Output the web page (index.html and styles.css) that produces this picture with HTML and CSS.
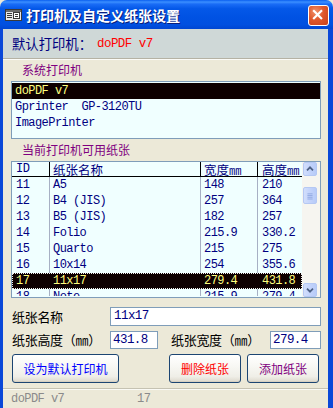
FILE: index.html
```html
<!DOCTYPE html>
<html lang="zh-CN">
<head>
<meta charset="utf-8">
<title>打印机及自定义纸张设置</title>
<link rel="stylesheet" href="styles.css">
</head>
<body>
<div class="window">
  <div class="titlebar">
    <svg class="app-icon" viewBox="0 0 17 12" width="17" height="12">
      <rect x="0.5" y="0.5" width="16" height="11" fill="#e8e8e8" stroke="#3a3a3a"/>
      <rect x="1" y="1" width="15" height="2" fill="#6a6a6a"/>
      <rect x="2" y="4" width="5" height="1" fill="#3a3a3a"/>
      <rect x="2" y="6" width="5" height="1" fill="#3a3a3a"/>
      <rect x="2" y="8" width="5" height="1" fill="#3a3a3a"/>
      <rect x="8.5" y="3.5" width="6" height="6" fill="#fff" stroke="#3a3a3a"/>
      <rect x="10" y="5" width="3" height="1" fill="#3a3a3a"/>
      <rect x="10" y="7" width="3" height="1" fill="#3a3a3a"/>
    </svg>
    <span class="title">打印机及自定义纸张设置</span>
    <div class="close">
      <svg viewBox="0 0 21 21" width="19" height="19">
        <path d="M5.5 5.5 L13.5 13.5 M13.5 5.5 L5.5 13.5" stroke="#fff" stroke-width="2.4" stroke-linecap="square"/>
      </svg>
    </div>
  </div>
  <div class="frame">
    <div class="client">
      <div class="default-strip">
        <span class="dlabel">默认打印机：</span><span class="dvalue mono">doPDF v7</span>
      </div>

      <div class="group-label">系统打印机</div>
      <div class="listbox">
        <div class="li mono selected">doPDF v7</div>
        <div class="li mono">Gprinter  GP-3120TU</div>
        <div class="li mono">ImagePrinter</div>
      </div>

      <div class="group-label">当前打印机可用纸张</div>
      <div class="grid">
        <div class="table">
          <div class="row head">
            <div class="c c-id mono">ID</div>
            <div class="c c-name">纸张名称</div>
            <div class="c c-w">宽度㎜</div>
            <div class="c c-h">高度㎜</div>
          </div>
          <div class="row mono"><div class="c c-id">11</div><div class="c c-name">A5</div><div class="c c-w">148</div><div class="c c-h">210</div></div>
          <div class="row mono"><div class="c c-id">12</div><div class="c c-name">B4 (JIS)</div><div class="c c-w">257</div><div class="c c-h">364</div></div>
          <div class="row mono"><div class="c c-id">13</div><div class="c c-name">B5 (JIS)</div><div class="c c-w">182</div><div class="c c-h">257</div></div>
          <div class="row mono"><div class="c c-id">14</div><div class="c c-name">Folio</div><div class="c c-w">215.9</div><div class="c c-h">330.2</div></div>
          <div class="row mono"><div class="c c-id">15</div><div class="c c-name">Quarto</div><div class="c c-w">215</div><div class="c c-h">275</div></div>
          <div class="row mono"><div class="c c-id">16</div><div class="c c-name">10x14</div><div class="c c-w">254</div><div class="c c-h">355.6</div></div>
          <div class="row mono selected"><div class="c c-id">17</div><div class="c c-name">11x17</div><div class="c c-w">279.4</div><div class="c c-h">431.8</div></div>
          <div class="row mono partial"><div class="c c-id">18</div><div class="c c-name">Note</div><div class="c c-w">215.9</div><div class="c c-h">279.4</div></div>
        </div>
        <div class="scrollbar">
          <div class="sb-btn">
            <svg viewBox="0 0 14 14" width="14" height="14"><path d="M3.5 8.5 L7 5 L10.5 8.5" fill="none" stroke="#4d6185" stroke-width="2"/></svg>
          </div>
          <div class="sb-gap"></div>
          <div class="sb-thumb">
            <svg viewBox="0 0 14 16" width="14" height="16"><path d="M4 5.5h6M4 7.5h6M4 9.5h6M4 11.5h6" stroke="#8ca5e0" stroke-width="1"/></svg>
          </div>
          <div class="sb-track"></div>
          <div class="sb-btn">
            <svg viewBox="0 0 14 14" width="14" height="14"><path d="M3.5 5.5 L7 9 L10.5 5.5" fill="none" stroke="#4d6185" stroke-width="2"/></svg>
          </div>
        </div>
      </div>

      <div class="form-row row1">
        <span class="flabel">纸张名称</span>
        <div class="input wide mono">11x17</div>
      </div>
      <div class="form-row row2">
        <span class="flabel">纸张高度（㎜）</span>
        <div class="input small mono">431.8</div>
        <span class="flabel second">纸张宽度（㎜）</span>
        <div class="input small2 mono">279.4</div>
      </div>

      <div class="buttons">
        <div class="btn btn-default">设为默认打印机</div>
        <div class="btn-group">
          <div class="btn btn-del">删除纸张</div>
          <div class="btn btn-add">添加纸张</div>
        </div>
      </div>

      <div class="status mono">
        <span class="st-printer">doPDF v7</span>
        <span class="st-id">17</span>
      </div>
    </div>
  </div>
</div>
</body>
</html>
```

FILE: styles.css
```css
* {
  box-sizing: border-box;
  margin: 0;
  padding: 0;
}

html, body {
  width: 333px;
  height: 408px;
  overflow: hidden;
  background: #ece9d8;
}

body {
  font-family: "Noto Sans CJK SC", "Noto Sans", sans-serif;
  font-size: 13.33px;
  color: #000080;
}

.mono {
  font-family: "Liberation Mono", "Noto Sans CJK SC", monospace;
  font-size: 12px;
  letter-spacing: -0.55px;
  white-space: pre;
}

.window {
  display: flex;
  flex-direction: column;
  width: 333px;
  height: 408px;
}

/* ---------- title bar ---------- */
.titlebar {
  height: 29px;
  flex: none;
  display: flex;
  align-items: center;
  padding-left: 5px;
  border-radius: 7px 7px 0 0;
  background: linear-gradient(to bottom,
    #0a5ff0 0%, #3b8fff 7%, #1a6cf6 14%, #0458e8 30%,
    #0052e3 60%, #0150e0 85%, #0046d2 100%);
}

.app-icon {
  flex: none;
  margin-top: 1px;
}

.title {
  margin-left: 4px;
  color: #fff;
  font-weight: bold;
  font-size: 14px;
  line-height: 16px;
  text-shadow: 1px 1px 0 #0a1e7a;
}

.close {
  margin-left: auto;
  margin-right: 4px;
  margin-top: 1px;
  width: 21px;
  height: 21px;
  border: 1px solid #fff;
  border-radius: 3px;
  background: radial-gradient(circle at 35% 30%, #f0926c 0%, #e0582c 45%, #c7401a 100%);
  display: flex;
  align-items: center;
  justify-content: center;
}

/* ---------- frame ---------- */
.frame {
  flex: 1;
  min-height: 0;
  display: flex;
  border-left: 3px solid #0a48d8;
  border-right: 5px solid #0a48d8;
}

.client {
  flex: 1;
  min-width: 0;
  display: flex;
  flex-direction: column;
  background: #ece9d8;
}

.default-strip {
  height: 30px;
  flex: none;
  display: flex;
  align-items: center;
  padding-left: 9px;
  background: #cfd8d7;
  border-bottom: 1px solid #b5b2a4;
  box-shadow: 0 1px 0 #fbfbf7;
}

.dlabel {
  width: 85px;
  font-size: 13.33px;
  line-height: 16px;
  color: #000080;
}

.dvalue {
  color: #ff0000;
  font-size: 12.5px;
}

.group-label {
  margin-top: 3px;
  margin-left: 19px;
  height: 16px;
  line-height: 16px;
  font-size: 12px;
  color: #800080;
}

/* ---------- list box ---------- */
.listbox {
  margin-top: 3px;
  margin-left: 8px;
  width: 310px;
  height: 58px;
  flex: none;
  border: 1px solid #7f9db9;
  background: #f0ffff;
  padding-top: 1px;
}

.li {
  height: 16px;
  line-height: 16px;
  padding-left: 3px;
  color: #000080;
}

.li.selected {
  background: #0e0000;
  color: #ffff80;
}

/* ---------- grid ---------- */
.grid {
  margin-top: 3px;
  margin-left: 8px;
  width: 310px;
  height: 137px;
  flex: none;
  display: flex;
  border: 1px solid #7f9db9;
  background: #f0ffff;
}

.table {
  width: 290px;
  flex: none;
}

.row {
  display: grid;
  grid-template-columns: 38px 151px 57px 44px;
  height: 16px;
  line-height: 16px;
  color: #000080;
}

.row.partial {
  height: 7px;
  overflow: hidden;
}

.row.head {
  height: 15px;
  line-height: 15px;
  border-bottom: 1px solid #000;
  font-size: 12.5px;
}

.c {
  white-space: pre;
  border-right: 1px solid #a7b0c4;
}

.row.head .c {
  border-right-color: #000;
}

.c-id { padding-left: 4px; }
.c-name { padding-left: 3px; }
.c-w { padding-left: 3px; }
.c-h { padding-left: 4px; border-right: none; }
.row.head .c-h { border-right: none; }

.row.selected {
  background: #0e0000;
  color: #ffff80;
  outline: 1px dotted #f0f0f0;
  outline-offset: -1px;
}

.row.selected .c {
  border-right-color: #0e0000;
}

/* ---------- scrollbar ---------- */
.scrollbar {
  flex: 1;
  display: flex;
  flex-direction: column;
  padding: 0 2px 0 1px;
  background: #f6f5f0;
}

.sb-btn,
.sb-thumb {
  width: 14px;
  flex: none;
  border: 1px solid #b5c8f3;
  border-radius: 2px;
  background: linear-gradient(to right, #d2defb, #c3d3fb 50%, #b7cbf8);
  display: flex;
  align-items: center;
  justify-content: center;
}

.sb-btn {
  height: 14px;
}

.sb-gap {
  height: 11px;
  flex: none;
}

.sb-thumb {
  height: 17px;
}

.sb-track {
  flex: 1;
}

/* ---------- form ---------- */
.form-row {
  display: flex;
  align-items: center;
  padding-left: 9px;
  flex: none;
}

.row1 {
  margin-top: 9px;
  height: 19px;
}

.row2 {
  margin-top: 5px;
  height: 18px;
}

.flabel {
  width: 98px;
  flex: none;
  font-size: 13px;
  color: #000;
  line-height: 16px;
  letter-spacing: -0.3px;
}

.flabel.second {
  margin-left: 13px;
  width: 99px;
}

.input {
  height: 100%;
  border: 1px solid #7f9db9;
  background: #fff;
  color: #000080;
  padding-left: 3px;
  line-height: 17px;
  font-size: 12.5px;
}

.input.wide { width: 211px; }
.input.small { width: 48px; padding-left: 2px; }
.input.small2 { width: 51px; padding-left: 2px; }

/* ---------- buttons ---------- */
.buttons {
  margin-top: 5px;
  height: 29px;
  flex: none;
  display: flex;
  justify-content: space-between;
  padding: 0 9px 0 9px;
}

.btn-group {
  display: flex;
  gap: 6px;
}

.btn {
  height: 29px;
  display: flex;
  align-items: center;
  justify-content: center;
  border: 1px solid #1c4572;
  border-radius: 3px;
  background: linear-gradient(to bottom, #ffffff 0%, #f8f8f4 40%, #efeee7 80%, #dcd8cc 100%);
  box-shadow: inset 0 -1px 0 #d6d0c2;
  font-size: 12px;
}

.btn-default { width: 107px; color: #0000ff; }
.btn-del { width: 72px; color: #ff0000; }
.btn-add { width: 72px; color: #800080; }

/* ---------- status bar ---------- */
.status {
  margin-top: 5px;
  flex: 1;
  display: flex;
  align-items: center;
  border-top: 1px solid #c5c2b2;
  box-shadow: inset 0 1px 0 #fafaf5;
  padding-left: 8px;
  color: #8a8a8a;
  font-size: 12px;
}

.st-printer {
  width: 126px;
}
```
